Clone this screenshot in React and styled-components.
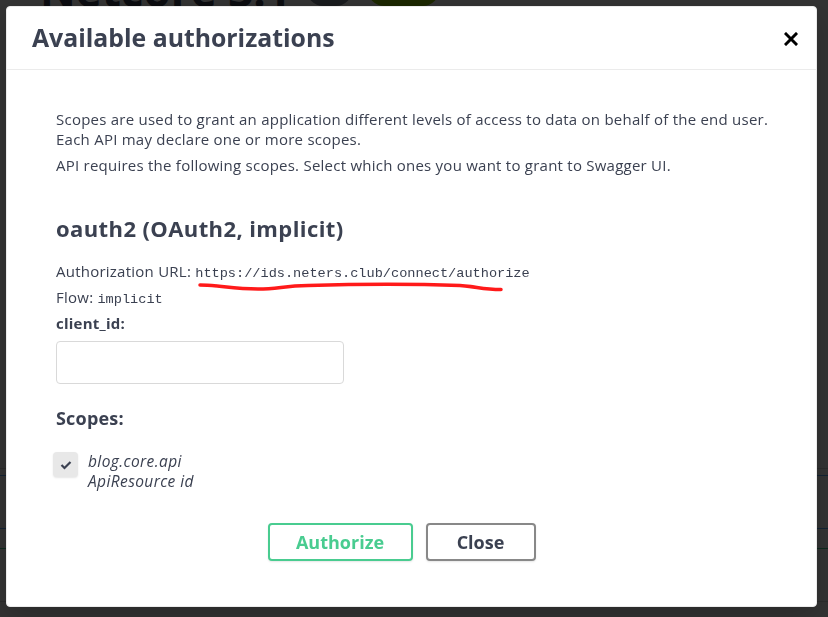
import React from 'react';
import styled, { createGlobalStyle } from 'styled-components';

const GlobalStyle = createGlobalStyle`
  html, body {
    margin: 0;
    padding: 0;
    background: #fff;
    font-family: "Open Sans", "Noto Sans", sans-serif;
    color: #3b4151;
  }
`;

const Page = styled.div`
  width: 828px;
  height: 617px;
  overflow: hidden;
  background: #fff;
`;

const PageTitle = styled.div`
  display: flex;
  align-items: center;
  gap: 16px;
  margin: -28px 0 0 40px;
  height: 36px;
`;

const TitleText = styled.span`
  font-size: 44px;
  font-weight: 700;
  color: #3b4151;
`;

const Badge = styled.span`
  display: inline-block;
  padding: 4px 12px;
  border-radius: 57px;
  font-size: 18px;
  font-weight: 700;
  color: #fff;
  background: ${p => p.$bg};
`;

const Rows = styled.div`
  display: flex;
  flex-direction: column;
  margin-top: 424px;
`;

const Row = styled.div`
  height: ${p => p.$h}px;
  border-bottom: 1px solid ${p => p.$c};
`;

const Overlay = styled.div`
  position: fixed;
  inset: 0;
  background: rgba(0, 0, 0, 0.8);
  padding: 6px 11px 10px 6px;
`;

const Modal = styled.div`
  background: #fff;
  border: 1px solid #ebebeb;
  border-radius: 4px;
  box-shadow: 0 10px 30px rgba(0, 0, 0, 0.2);
  height: 601px;
  box-sizing: border-box;
`;

const Header = styled.div`
  display: flex;
  align-items: center;
  justify-content: space-between;
  height: 63px;
  box-sizing: border-box;
  padding: 0 16px 3px 25px;
  border-bottom: 1px solid #ebebeb;
`;

const ModalTitle = styled.h3`
  margin: 0;
  font-size: 24.8px;
  line-height: 32px;
  font-weight: 700;
  color: #3b4151;
`;

const CloseX = styled.button`
  border: none;
  background: none;
  padding: 0;
  width: 16px;
  height: 16px;
  display: flex;
  margin-top: 7px;
  cursor: pointer;
`;

const Body = styled.div`
  padding: 39px 40px 0 49px;
  font-size: 15px;
  letter-spacing: 0.24px;
`;

const Para = styled.p`
  margin: 0 0 6px;
  line-height: 20px;
`;

const SchemeTitle = styled.h4`
  margin: 39px 0 19px;
  font-size: 22px;
  line-height: 28px;
  letter-spacing: 0.4px;
  font-weight: 700;
  color: #3b4151;
`;

const InfoLine = styled.p`
  margin: 0 0 6px;
  height: 20px;
  line-height: 20px;
  position: relative;
`;

const Code = styled.code`
  font-family: "Liberation Mono", "DejaVu Sans Mono", monospace;
  font-size: 13.6px;
  line-height: 1;
  letter-spacing: 0;
  color: #3b4151;
`;

const Scribble = styled.svg`
  position: absolute;
  left: 142px;
  top: 20px;
  pointer-events: none;
`;

const Label = styled.label`
  display: block;
  font-weight: 700;
  line-height: 20px;
`;

const Input = styled.input`
  display: block;
  box-sizing: border-box;
  width: 288px;
  height: 43px;
  margin: 8px 0 0;
  border: 1px solid #d9d9d9;
  border-radius: 4px;
  background: #fff;
`;

const ScopesTitle = styled.h2`
  margin: 21px 0 20px;
  font-size: 18px;
  line-height: 26px;
  letter-spacing: 0.2px;
  font-weight: 700;
  color: #3b4151;
`;

const ScopeItem = styled.div`
  display: flex;
  gap: 10px;
  align-items: flex-start;
  margin-left: -3px;
`;

const Check = styled.span`
  width: 25px;
  height: 25px;
  margin-top: 1px;
  border-radius: 4px;
  background: #e8e8e8;
  box-shadow: 0 1px 2px rgba(0,0,0,0.1);
  display: flex;
  align-items: center;
  justify-content: center;
`;

const ScopeText = styled.div`
  font-style: italic;
  font-size: 15.5px;
  letter-spacing: 0.4px;
  line-height: 20px;
  color: #3b4151;
`;

const Buttons = styled.div`
  display: flex;
  justify-content: center;
  gap: 13px;
  margin: 32px 0 0 -29px;
`;

const Btn = styled.button`
  box-sizing: border-box;
  height: 38px;
  width: ${p => p.$w}px;
  border: 2px solid ${p => p.$c};
  border-radius: 4px;
  background: #fff;
  color: ${p => p.$text};
  font-family: "Open Sans", "Noto Sans", sans-serif;
  font-size: 18px;
  font-weight: 700;
  letter-spacing: 0;
  box-shadow: 0 1px 2px rgba(0,0,0,0.1);
  cursor: pointer;
`;

export default function App() {
  return (
    <>
      <GlobalStyle />
      <Page>
        <PageTitle>
          <TitleText>Netcore 3.1</TitleText>
          <Badge $bg="#7d8492">v1</Badge>
          <Badge $bg="#89bf04">OAS3</Badge>
        </PageTitle>
        <Rows>
          <Row $h={36} $c="#d8d8d8" />
          <Row $h={6} $c="#61affe" />
          <Row $h={52} $c="#61affe" />
          <Row $h={19} $c="#49cc90" />
          <Row $h={52} $c="#d8d8d8" />
        </Rows>
      </Page>
      <Overlay>
        <Modal>
          <Header>
            <ModalTitle>Available authorizations</ModalTitle>
            <CloseX aria-label="close">
              <svg width="14" height="14" viewBox="0 0 14 14">
                <path d="M2 2 L12 12 M12 2 L2 12" stroke="#000" strokeWidth="3" strokeLinecap="square" />
              </svg>
            </CloseX>
          </Header>
          <Body>
            <Para>
              Scopes are used to grant an application different levels of access to data on behalf of the end user. Each API may declare one or more scopes.
            </Para>
            <Para>API requires the following scopes. Select which ones you want to grant to Swagger UI.</Para>
            <SchemeTitle>oauth2 (OAuth2, implicit)</SchemeTitle>
            <InfoLine>
              Authorization URL: <Code>https://ids.neters.club/connect/authorize</Code>
              <Scribble width="310" height="14" viewBox="0 0 310 14">
                <path
                  d="M2 4 C20 4 35 8 60 8 C80 8 85 5 110 4.5 C160 3 220 3 262 4.5 C278 5.5 285 8.5 303 8.5"
                  fill="none"
                  stroke="#ff1a1a"
                  strokeWidth="3.5"
                  strokeLinecap="round"
                />
              </Scribble>
            </InfoLine>
            <InfoLine>
              Flow: <Code>implicit</Code>
            </InfoLine>
            <Label>client_id:</Label>
            <Input type="text" />
            <ScopesTitle>Scopes:</ScopesTitle>
            <ScopeItem>
              <Check>
                <svg width="12" height="10" viewBox="0 0 12 10">
                  <path d="M1.5 5 L4.5 8 L10.5 2" fill="none" stroke="#3b4151" strokeWidth="2.2" />
                </svg>
              </Check>
              <ScopeText>
                blog.core.api
                <br />
                ApiResource id
              </ScopeText>
            </ScopeItem>
            <Buttons>
              <Btn $w={145} $c="#49cc90" $text="#49cc90">Authorize</Btn>
              <Btn $w={110} $c="#888" $text="#3b4151">Close</Btn>
            </Buttons>
          </Body>
        </Modal>
      </Overlay>
    </>
  );
}
